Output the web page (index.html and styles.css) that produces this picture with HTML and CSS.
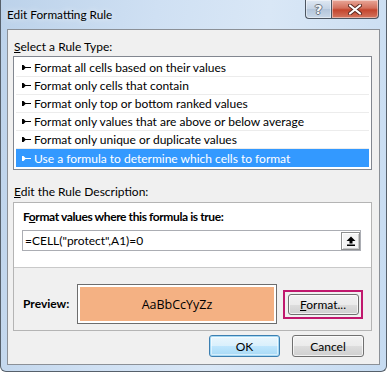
FILE: index.html
```html
<!DOCTYPE html>
<html lang="en">
<head>
    <meta charset="UTF-8">
    <title>Edit Formatting Rule</title>
    <link rel="stylesheet" href="styles.css">
</head>
<body>
    <div class="window">
        <div class="titlebar">
            <span class="title">Edit Formatting Rule</span>
            <div class="caption-buttons">
                <span class="cap-btn help">?</span>
                <span class="cap-btn close">
                    <svg width="14" height="11" viewBox="0 0 14 11">
                        <path d="M2 1.5 L12 9.5 M12 1.5 L2 9.5" stroke="#5a2a22" stroke-width="4" stroke-linecap="round"/>
                        <path d="M2 1.5 L12 9.5 M12 1.5 L2 9.5" stroke="#fff" stroke-width="2.2" stroke-linecap="round"/>
                    </svg>
                </span>
            </div>
        </div>
        <div class="client">
            <div class="group-label"><u>S</u>elect a Rule Type:</div>
            <ul class="rule-list">
                <li><svg class="arrow" width="9" height="5" viewBox="0 0 9 5"><path d="M0 0 H1.5 L3.5 2 H9 V3 H3.5 L1.5 5 H0 Z"/></svg>Format all cells based on their values</li>
                <li><svg class="arrow" width="9" height="5" viewBox="0 0 9 5"><path d="M0 0 H1.5 L3.5 2 H9 V3 H3.5 L1.5 5 H0 Z"/></svg>Format only cells that contain</li>
                <li><svg class="arrow" width="9" height="5" viewBox="0 0 9 5"><path d="M0 0 H1.5 L3.5 2 H9 V3 H3.5 L1.5 5 H0 Z"/></svg>Format only top or bottom ranked values</li>
                <li><svg class="arrow" width="9" height="5" viewBox="0 0 9 5"><path d="M0 0 H1.5 L3.5 2 H9 V3 H3.5 L1.5 5 H0 Z"/></svg>Format only values that are above or below average</li>
                <li><svg class="arrow" width="9" height="5" viewBox="0 0 9 5"><path d="M0 0 H1.5 L3.5 2 H9 V3 H3.5 L1.5 5 H0 Z"/></svg>Format only unique or duplicate values</li>
                <li class="selected"><svg class="arrow" width="9" height="5" viewBox="0 0 9 5"><path d="M0 0 H1.5 L3.5 2 H9 V3 H3.5 L1.5 5 H0 Z"/></svg>Use a formula to determine which cells to format</li>
            </ul>
            <div class="group-label desc-label"><u>E</u>dit the Rule Description:</div>
            <div class="desc-box">
                <div class="desc-top">
                    <div class="bold-label formula-label">F<u>o</u>rmat values where this formula is true:</div>
                    <div class="formula">
                        <span class="formula-text">=CELL("protect",A1)=0</span>
                        <span class="ref-btn">
                            <svg width="10" height="10" viewBox="0 0 10 10">
                                <path d="M5 0.5 L9.5 5 H6.5 V7.5 H3.5 V5 H0.5 Z M1 8.5 H9 V10 H1 Z" fill="#000"/>
                            </svg>
                        </span>
                    </div>
                </div>
                <div class="desc-bottom">
                    <span class="bold-label preview-label">Preview:</span>
                    <div class="preview"><div class="preview-fill">AaBbCcYyZz</div></div>
                    <div class="focus-frame"><button class="btn"><u>F</u>ormat...</button></div>
                </div>
            </div>
            <div class="footer">
                <button class="btn default">OK</button>
                <button class="btn">Cancel</button>
            </div>
        </div>
    </div>
</body>
</html>
```

FILE: styles.css
```css
body {
    margin: 0;
    padding: 0;
    font-family: Lato, sans-serif;
    font-size: 12px;
    color: #000;
}
.window {
    width: 387px;
    height: 372px;
    box-sizing: border-box;
    padding: 0 6px 6px 6px;
    display: flex;
    flex-direction: column;
    background: linear-gradient(100deg, #bcd2ea 0%, #cfe0f3 35%, #d9e7f6 60%, #c6dbf1 100%);
    border: 1px solid #56606b;
    border-top: none;
    border-radius: 0 0 6px 6px;
}
.titlebar {
    height: 29px;
    display: flex;
    justify-content: space-between;
    align-items: flex-start;
    flex-shrink: 0;
}
.title {
    font-size: 11.8px;
    line-height: 14px;
    margin-top: 8px;
    text-shadow: 0 0 6px rgba(255, 255, 255, 0.9);
}
.caption-buttons {
    display: flex;
    margin-right: 1px;
}
.cap-btn {
    height: 18px;
    display: flex;
    align-items: center;
    justify-content: center;
    border: 1px solid #4c5560;
    border-top: none;
    box-shadow: inset 0 0 0 1px rgba(255, 255, 255, 0.45);
}
.help {
    width: 25px;
    border-right: none;
    border-radius: 0 0 0 4px;
    background: linear-gradient(#dfe8f3, #c4d3e4 50%, #b3c5da 51%, #c9d8e8);
    color: #f4f6f8;
    font-weight: bold;
    font-size: 13px;
    font-family: "DejaVu Sans", sans-serif;
    text-shadow: -1px 0 #6b7480, 1px 0 #6b7480, 0 1px #6b7480, 0 -1px #6b7480;
}
.close {
    width: 46px;
    border-radius: 0 0 4px 0;
    background: linear-gradient(#e9a899, #d3705c 45%, #c4452d 55%, #d4765f);
}
.client {
    flex: 1;
    background: #f0f0f0;
    border: 1px solid #8b9097;
    padding: 9px 7px 0 5px;
    display: flex;
    flex-direction: column;
}
.group-label {
    line-height: 16px;
    padding-left: 1px;
}
.rule-list {
    list-style: none;
    margin: 1px 0 0 0;
    padding: 2px;
    background: #fff;
    border: 1px solid #828790;
}
.rule-list li {
    height: 18px;
    box-sizing: border-box;
    border-bottom: 1px solid #ececec;
    display: flex;
    align-items: center;
    padding-left: 6px;
    white-space: nowrap;
}
.rule-list li.selected {
    background: #3399ff;
    color: #fff;
    border-bottom: none;
}
.arrow {
    margin-right: 3px;
    fill: #000;
}
.selected .arrow {
    fill: #fff;
}
.desc-label {
    margin-top: 14px;
}
.desc-box {
    margin-top: 2px;
    border: 1px solid #b4b4b4;
}
.desc-top {
    background: #fff;
    padding: 6px 10px 16px 8px;
    border-bottom: 1px solid #c9c9c9;
}
.bold-label {
    font-weight: bold;
    line-height: 16px;
    padding-left: 1px;
}
.formula-label {
    letter-spacing: -0.4px;
}
.formula {
    margin-top: 5px;
    height: 21px;
    box-sizing: border-box;
    border: 1px solid #abadb3;
    display: flex;
    align-items: center;
    justify-content: space-between;
    padding-left: 2px;
}
.ref-btn {
    width: 19px;
    height: 18px;
    box-sizing: border-box;
    border: 1px solid #8e8f8f;
    box-shadow: inset 1px 1px #fff, inset -1px -1px #c8c8c8;
    background: #f4f4f4;
    display: flex;
    align-items: center;
    justify-content: center;
}
.desc-bottom {
    display: flex;
    align-items: center;
    padding: 16px 0 6px 9px;
}
.preview-label {
    width: 54px;
    padding-left: 0;
}
.preview {
    width: 200px;
    height: 40px;
    box-sizing: border-box;
    border: 1px solid #6d6d6d;
    padding: 2px;
    background: #fff;
}
.preview-fill {
    height: 100%;
    background: #f4b183;
    display: flex;
    align-items: center;
    justify-content: center;
    font-family: "Open Sans", sans-serif;
    font-size: 12.5px;
}
.focus-frame {
    margin-left: 6px;
    width: 80px;
    height: 29px;
    box-sizing: border-box;
    border: 2px solid #c0186d;
    display: flex;
    align-items: center;
    justify-content: center;
}
.btn {
    font-family: Lato, sans-serif;
    font-size: 12px;
    color: #000;
    width: 71px;
    height: 22px;
    padding: 0;
    border: 1px solid #707070;
    border-radius: 3px;
    background: linear-gradient(#f2f2f2, #ebebeb 50%, #dddddd 51%, #cfcfcf);
    box-shadow: inset 0 0 0 1px rgba(255, 255, 255, 0.7);
}
.focus-frame .btn {
    height: 21px;
}
.footer {
    display: flex;
    justify-content: flex-end;
    gap: 12px;
    margin-top: 4px;
    padding-right: 8px;
}
.btn.default {
    border-color: #3c7fb1;
    box-shadow: inset 0 0 0 1px #a6d9f4, inset 0 0 0 2px rgba(255, 255, 255, 0.5);
    background: linear-gradient(#eaf6fd, #d9f0fc 50%, #bee6fd 51%, #a7d9f5);
}
.footer .btn + .btn {
    width: 72px;
}
```
